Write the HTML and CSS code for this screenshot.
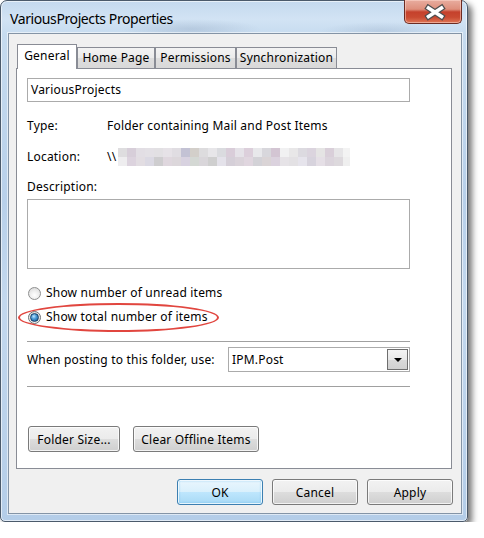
FILE: index.html
```html
<!DOCTYPE html>
<html>
<head>
<meta charset="utf-8">
<link rel="stylesheet" href="styles.css">
</head>
<body>
<div class="window">
  <div class="titlebar">
    <span class="title">VariousProjects Properties</span>
    <div class="close">
      <svg width="58" height="23" viewBox="0 0 58 23">
        <path d="M23.5 8 L36.5 16.5 M36.5 8 L23.5 16.5" stroke="#4e4e4e" stroke-width="6" stroke-linecap="square" fill="none"/>
        <path d="M23.5 8 L36.5 16.5 M36.5 8 L23.5 16.5" stroke="#ffffff" stroke-width="3.6" stroke-linecap="square" fill="none"/>
      </svg>
    </div>
  </div>
  <div class="client">
    <div class="tabs">
      <div class="tab active t-general">General</div>
      <div class="tab t-home">Home Page</div>
      <div class="tab t-perm">Permissions</div>
      <div class="tab t-sync">Synchronization</div>
    </div>
    <div class="panel">
      <div class="textbox name">VariousProjects</div>
      <div class="row type"><span class="label">Type:</span><span>Folder containing Mail and Post Items</span></div>
      <div class="row loc"><span class="label">Location:</span><span class="loc-val">\\</span><span class="blur"><span class="blur-a"></span><span class="blur-b"></span></span></div>
      <div class="row desc-label">Description:</div>
      <div class="textbox desc"></div>
      <div class="radios">
        <div class="radio"><span class="circle"></span>Show number of unread items</div>
        <div class="radio second"><span class="circle checked"></span>Show total number of items</div>
        <span class="annot"></span>
      </div>
      <div class="sep sep1"></div>
      <div class="posting">
        <span>When posting to this folder, use:</span>
        <div class="combo"><span class="combo-text">IPM.Post</span><span class="arrow"><span class="tri"></span></span></div>
      </div>
      <div class="sep sep2"></div>
      <div class="panel-buttons">
        <button class="btn b-size">Folder Size...</button>
        <button class="btn b-clear">Clear Offline Items</button>
      </div>
    </div>
    <div class="dialog-buttons">
      <button class="btn default">OK</button>
      <button class="btn">Cancel</button>
      <button class="btn">Apply</button>
    </div>
  </div>
</div>
</body>
</html>
```

FILE: styles.css
```css
* { box-sizing: border-box; }

body {
  margin: 0;
  background: #ffffff;
  font-family: "Noto Sans", "Open Sans", sans-serif;
  font-size: 12px;
  letter-spacing: 0.2px;
  color: #000;
}

.window {
  width: 468px;
  height: 522px;
  border: 1px solid #4b5a6b;
  border-radius: 7px 7px 5px 5px;
  background:
    radial-gradient(ellipse 70px 10px at 190px 28px, rgba(120,140,170,0.25), rgba(120,140,170,0) 100%),
    radial-gradient(ellipse 60px 9px at 380px 30px, rgba(120,140,170,0.2), rgba(120,140,170,0) 100%),
    linear-gradient(180deg, #c4d9ee 0px, #d2e3f4 18px, #c6dbef 34px, #b8d0ea 200px, #c3d8ee 300px, #b4cde8 520px);
  box-shadow: 4px 4px 6px rgba(0,0,0,0.55), inset 0 0 0 1px rgba(255,255,255,0.6);
  display: flex;
  flex-direction: column;
}

.titlebar {
  height: 32px;
  display: flex;
  justify-content: space-between;
  align-items: flex-start;
  padding-left: 9px;
}

.title {
  font-size: 14px;
  letter-spacing: -0.4px;
  line-height: 18px;
  margin-top: 9px;
  color: #000;
}

.close {
  width: 58px;
  height: 24px;
  margin-top: -1px;
  margin-right: 5px;
  border: 1px solid #6b2b22;
  border-top: none;
  border-radius: 0 0 5px 5px;
  background: linear-gradient(180deg, #e8ad9f 0%, #de8f7c 40%, #c5412c 52%, #c94a31 75%, #df7656 100%);
  box-shadow: inset 0 0 0 1px rgba(255,220,210,0.5);
}

.close svg { display: block; }

.client {
  flex: 1;
  margin: 0 5px 7px 7px;
  border: 1px solid #8494a6;
  background: #f0f0f0;
  padding: 10px 9px 0 7px;
  display: flex;
  flex-direction: column;
  box-shadow: 0 0 0 1px rgba(255,255,255,0.55);
}

.tabs {
  display: flex;
  align-items: flex-end;
  height: 24px;
  margin-left: 1px;
}

.tab {
  height: 21px;
  border: 1px solid #898c95;
  border-bottom: none;
  background: linear-gradient(180deg, #f3f3f3 0%, #ebebeb 50%, #dddddd 51%, #d9d9d9 100%);
  text-align: center;
  line-height: 16px;
  padding-top: 2px;
  white-space: nowrap;
}

.tab.active {
  height: 25px;
  margin-bottom: -1px;
  background: #ffffff;
  padding-top: 3px;
  position: relative;
  z-index: 1;
}

.t-general { width: 60px; }
.t-home { width: 78px; }
.t-perm { width: 81px; }
.t-sync { width: 101px; }

.panel {
  width: 436px;
  height: 401px;
  border: 1px solid #898c95;
  background: #ffffff;
  padding: 0 10px;
  display: flex;
  flex-direction: column;
}

.textbox {
  width: 383px;
  border: 1px solid #ababab;
  background: #fff;
}

.name {
  margin-top: 9px;
  height: 24px;
  line-height: 16px;
  padding: 3px 3px;
}

.row {
  display: flex;
  align-items: center;
  line-height: 16px;
  height: 16px;
}

.label { width: 80px; }

.type { margin-top: 16px; }

.loc { margin-top: 14px; height: 18px; }
.loc-val { width: 11px; }

.blur {
  display: flex;
  flex-direction: column;
  width: 232px;
  height: 18px;
  overflow: hidden;
}

.blur-a, .blur-b { display: block; height: 9px; width: 234px; }

.blur-a {
  background: linear-gradient(to right, #dedddf 0 9px, #d7ced9 9px 18px, #e2dee4 18px 27px, #e3e0e5 27px 36px, #e2e0e3 36px 45px, #e6e2e7 45px 54px, #e0dde2 54px 63px, #c3c2d4 63px 72px, #d3cfca 72px 81px, #dddcde 81px 90px, #e7e6e9 90px 99px, #dadbdf 99px 108px, #d9cdd9 108px 117px, #e5e2e8 117px 126px, #dccfdb 126px 135px, #e8e8eb 135px 144px, #d8d7dc 144px 153px, #d3c5d3 153px 162px, #f1f1f2 162px 171px, #e8e7e8 171px 180px, #dcdae0 180px 189px, #dbd4de 189px 198px, #e5e4e4 198px 207px, #d9cfd9 207px 216px, #e6e5e7 216px 225px, #f3f3f3 225px 234px);
}

.blur-b {
  background: linear-gradient(to right, #eeedef 0 9px, #dcd3de 9px 18px, #e2dde2 18px 27px, #dbd9e3 27px 36px, #cecdcf 36px 45px, #dfd7de 45px 54px, #dcd7db 54px 63px, #d8d2e0 63px 72px, #d4d8d4 72px 81px, #d9d6da 81px 90px, #cfcfcf 90px 99px, #e4e2ea 99px 108px, #d5cfd8 108px 117px, #dad3da 117px 126px, #e0d6df 126px 135px, #d3d2d7 135px 144px, #dad4d6 144px 153px, #dbd2de 153px 162px, #e6e3e7 162px 171px, #e3e1e4 171px 180px, #e6e4ec 180px 189px, #d7d3dd 189px 198px, #e5dfe6 198px 207px, #dbd4dc 207px 216px, #ddd9dd 216px 225px, #efefef 225px 234px);
}

.desc-label { margin-top: 13px; }

.desc {
  margin-top: 4px;
  height: 70px;
}

.radios {
  position: relative;
  margin-top: 16px;
}

.radio {
  display: flex;
  align-items: center;
  height: 16px;
  line-height: 16px;
  margin-left: 1px;
}

.radio.second { margin-top: 8px; }

.circle {
  width: 13px;
  height: 13px;
  margin-right: 5px;
  border: 1px solid #8e8f8f;
  border-radius: 50%;
  background: radial-gradient(circle at 50% 65%, #ffffff 0%, #eeeeee 45%, #d4d4d4 100%);
  display: flex;
  align-items: center;
  justify-content: center;
  flex: none;
}

.circle.checked { border-color: #6d6f73; }

.circle.checked::after {
  content: "";
  width: 7px;
  height: 7px;
  border-radius: 50%;
  border: 1px solid #173f66;
  background: radial-gradient(circle at 40% 35%, #bfe7ff 0%, #4a9ad6 40%, #0f4d88 100%);
}

.annot {
  position: absolute;
  left: -9px;
  top: 18px;
  width: 201px;
  height: 29px;
  border: 2px solid #e1463f;
  border-radius: 50%;
}

.sep {
  width: 383px;
  height: 1px;
  background: #a0a0a0;
}

.sep1 { margin-top: 16px; }
.sep2 { margin-top: 14px; }

.posting {
  margin-top: 5px;
  height: 25px;
  width: 383px;
  display: flex;
  align-items: center;
  justify-content: space-between;
}

.combo {
  width: 182px;
  height: 25px;
  border: 1px solid #ababab;
  display: flex;
  align-items: center;
  justify-content: space-between;
  padding-left: 3px;
}

.arrow {
  width: 21px;
  height: 21px;
  margin-right: 1px;
  border: 1px solid #6e6e6e;
  background: linear-gradient(180deg, #f4f4f4 0%, #e8e8e8 50%, #d9d9d9 51%, #d0d0d0 100%);
  display: flex;
  align-items: center;
  justify-content: center;
}

.tri {
  width: 0;
  height: 0;
  border-left: 4px solid transparent;
  border-right: 4px solid transparent;
  border-top: 4px solid #000;
}

.panel-buttons {
  margin-top: 39px;
  margin-left: 1px;
  display: flex;
  gap: 13px;
}

.btn {
  font: inherit;
  letter-spacing: inherit;
  color: #000;
  height: 26px;
  padding: 0;
  border: 1px solid #7a7a7a;
  border-radius: 3px;
  background: linear-gradient(180deg, #f2f2f2 0%, #ebebeb 50%, #dddddd 51%, #cfcfcf 100%);
  box-shadow: inset 0 0 0 1px rgba(255,255,255,0.75);
}

.b-size { width: 92px; }
.b-clear { width: 126px; }

.dialog-buttons {
  margin-top: 10px;
  margin-right: -1px;
  display: flex;
  justify-content: flex-end;
  gap: 9px;
}

.dialog-buttons .btn { width: 86px; }

.btn.default {
  border-color: #3c7fb1;
  background: linear-gradient(180deg, #eaf6fd 0%, #d9f0fc 50%, #bee6fd 51%, #a7d9f5 100%);
  box-shadow: inset 0 0 0 1px rgba(255,255,255,0.8), inset 0 0 2px 1px rgba(72,180,240,0.5);
}
```
